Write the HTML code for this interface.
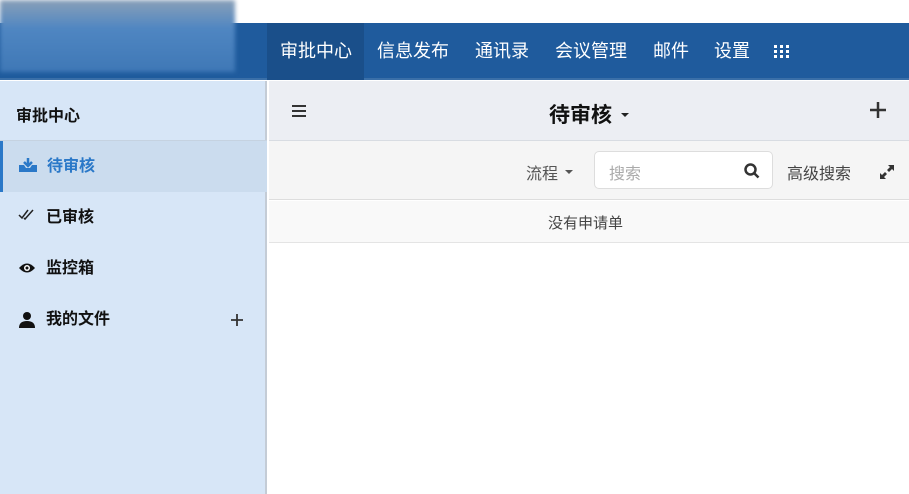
<!DOCTYPE html><html><head><meta charset="utf-8"><style>
*{margin:0;padding:0;box-sizing:border-box}
body{width:909px;height:494px;overflow:hidden;background:#fff;font-family:"Liberation Sans","Noto Sans CJK SC",sans-serif;position:relative}
.abs{position:absolute}
.nav{left:0;top:23px;width:909px;height:57px;background:#1f5b9d;border-bottom:2px solid #3a6fa8}
.logo{left:0;top:0;width:235px;height:72px;background:linear-gradient(180deg,#8aa0b8 0%,#4f86c2 40%,#3f78b6 100%);filter:blur(2px)}
.tab{top:23px;height:57px;line-height:57px;color:#fff;font-size:18px}
.side{left:0;top:81px;width:267px;height:413px;background:#d7e6f7;border-right:2px solid #c4ccd6}
.item{left:0;width:267px;height:51px;line-height:51px;font-size:16px;font-weight:bold;color:#111}
</style></head><body>
<div class="abs nav"></div>
<div class="abs logo"></div>
<div class="abs" style="left:267px;top:23px;width:97px;height:57px;background:#1a4f8a"></div>
<div class="abs tab" style="left:280px">审批中心</div>
<div class="abs tab" style="left:377px">信息发布</div>
<div class="abs tab" style="left:475px">通讯录</div>
<div class="abs tab" style="left:555px">会议管理</div>
<div class="abs tab" style="left:653px">邮件</div>
<div class="abs tab" style="left:714px">设置</div>
<svg class="abs" style="left:774px;top:45px" width="16" height="14" fill="#fff"><rect x="0" y="0" width="3" height="3"/><rect x="6" y="0" width="3" height="3"/><rect x="12" y="0" width="3" height="3"/><rect x="0" y="5" width="3" height="3"/><rect x="6" y="5" width="3" height="3"/><rect x="12" y="5" width="3" height="3"/><rect x="0" y="10" width="3" height="3"/><rect x="6" y="10" width="3" height="3"/><rect x="12" y="10" width="3" height="3"/></svg>
<div class="abs side"></div>
<div class="abs" style="left:0;top:140px;width:267px;height:1px;background:#c5d2e0"></div>
<div class="abs" style="left:16px;top:102px;font-size:16px;font-weight:bold;color:#111">审批中心</div>
<div class="abs item" style="top:141px;background:#cbdcee;border-left:3px solid #2a78c8;color:#2a78c8;padding-left:44px">待审核</div>
<svg class="abs" style="left:19px;top:158px" width="18" height="14"><path d="M9 0v7M5 4l4 4 4-4" stroke="#2a78c8" stroke-width="2.5" fill="none"/><path d="M0 7h5l2 3h4l2-3h5v7H0z" fill="#2a78c8"/></svg>
<div class="abs item" style="top:192px;padding-left:46px">已审核</div>
<svg class="abs" style="left:18px;top:209px" width="18" height="12" fill="none" stroke="#222" stroke-width="1.5"><path d="M1 6l3 3 6-8M6 9l1 1 8-9"/></svg>
<div class="abs item" style="top:243px;padding-left:46px">监控箱</div>
<svg class="abs" style="left:18px;top:262px" width="18" height="12"><path d="M1 6Q9-3 17 6Q9 15 1 6z" fill="#111"/><circle cx="9" cy="6" r="3" fill="#fff"/><circle cx="9" cy="6" r="1.5" fill="#111"/></svg>
<div class="abs item" style="top:294px;padding-left:46px">我的文件</div>
<svg class="abs" style="left:19px;top:312px" width="16" height="16" fill="#111"><circle cx="8" cy="4" r="4"/><path d="M0 16q0-7 8-7t8 7z"/></svg>
<svg class="abs" style="left:231px;top:314px" width="12" height="12" stroke="#333" stroke-width="1.8"><path d="M6 0v12M0 6h12"/></svg>
<div class="abs" style="left:269px;top:81px;width:640px;height:60px;background:#eceef3;border-bottom:1px solid #d8dce2"></div>
<div class="abs" style="left:292px;top:105px;width:14px;height:2px;background:#333;box-shadow:0 5px 0 #333,0 10px 0 #333"></div>
<div class="abs" style="left:549px;top:99px;font-size:21px;font-weight:bold;color:#111">待审核</div>
<div class="abs" style="left:621px;top:113px;border:4px solid transparent;border-top-color:#222;border-bottom:0"></div>
<svg class="abs" style="left:870px;top:102px" width="16" height="16" stroke="#333" stroke-width="2.5"><path d="M8 0v16M0 8h16"/></svg>
<div class="abs" style="left:269px;top:141px;width:640px;height:59px;background:#f5f5f5;border-bottom:1px solid #ddd"></div>
<div class="abs" style="left:526px;top:160px;font-size:16px;color:#555">流程</div>
<div class="abs" style="left:565px;top:170px;border:4px solid transparent;border-top-color:#555;border-bottom:0"></div>
<div class="abs" style="left:594px;top:151px;width:179px;height:38px;background:#fff;border:1px solid #ddd;border-radius:5px"></div>
<div class="abs" style="left:609px;top:160px;font-size:16px;color:#aaa">搜索</div>
<svg class="abs" style="left:744px;top:163px" width="16" height="16" fill="none" stroke="#333" stroke-width="2.5"><circle cx="6.5" cy="6.5" r="5"/><path d="M10 10l4.5 4.5"/></svg>
<div class="abs" style="left:787px;top:160px;font-size:16px;color:#444">高级搜索</div>
<svg class="abs" style="left:880px;top:165px" width="14" height="14" fill="#333"><path d="M14 0v6l-2-2-3 3-2-2 3-3-2-2zM0 14V8l2 2 3-3 2 2-3 3 2 2z"/></svg>
<div class="abs" style="left:269px;top:201px;width:640px;height:42px;background:#f9f9f9;border-bottom:1px solid #e4e4e4"></div>
<div class="abs" style="left:548px;top:212px;font-size:15px;color:#444">没有申请单</div>
</body></html>
